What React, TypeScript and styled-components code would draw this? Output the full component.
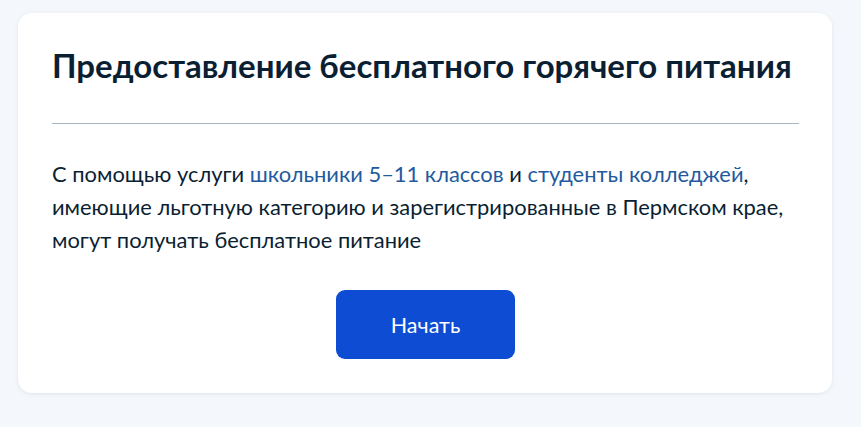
import React from 'react';
import styled, { createGlobalStyle } from 'styled-components';

const GlobalStyle = createGlobalStyle`
  html, body {
    margin: 0;
    padding: 0;
    background: #f4f7fb;
  }
  body {
    font-family: Lato, "Noto Sans", sans-serif;
  }
`;

const Page = styled.div`
  padding: 13px 29px 34px 18px;
`;

const Card = styled.section`
  background: #ffffff;
  border-radius: 14px;
  box-shadow: 0 1px 4px rgba(102, 119, 136, 0.12);
  padding: 32px 33px 34px 34px;
  display: flex;
  flex-direction: column;
`;

const Title = styled.h1`
  margin: 0;
  font-size: 33px;
  line-height: 40px;
  font-weight: 700;
  color: #0b1f33;
`;

const Divider = styled.hr`
  border: none;
  border-top: 1px solid #a7b6c2;
  margin: 38px 0 33px;
`;

const Text = styled.p`
  margin: 0;
  font-size: 21.9px;
  line-height: 33px;
  color: #0b1f33;
`;

const Link = styled.a`
  color: #235a9e;
  text-decoration: none;
  cursor: pointer;
`;

const Actions = styled.div`
  display: flex;
  justify-content: center;
  margin-top: 34px;
`;

const Button = styled.button`
  width: 179px;
  height: 69px;
  border: none;
  border-radius: 9px;
  background: #0d4cd3;
  color: #ffffff;
  font-family: Lato, "Noto Sans", sans-serif;
  font-size: 21.5px;
  cursor: pointer;
`;

export default function App() {
  return (
    <>
      <GlobalStyle />
      <Page>
        <Card>
          <Title>Предоставление бесплатного горячего питания</Title>
          <Divider />
          <Text>
            С помощью услуги <Link>школьники 5–11 классов</Link> и <Link>студенты колледжей</Link>,
            <br />
            имеющие льготную категорию и зарегистрированные в Пермском крае,
            <br />
            могут получать бесплатное питание
          </Text>
          <Actions>
            <Button>Начать</Button>
          </Actions>
        </Card>
      </Page>
    </>
  );
}
